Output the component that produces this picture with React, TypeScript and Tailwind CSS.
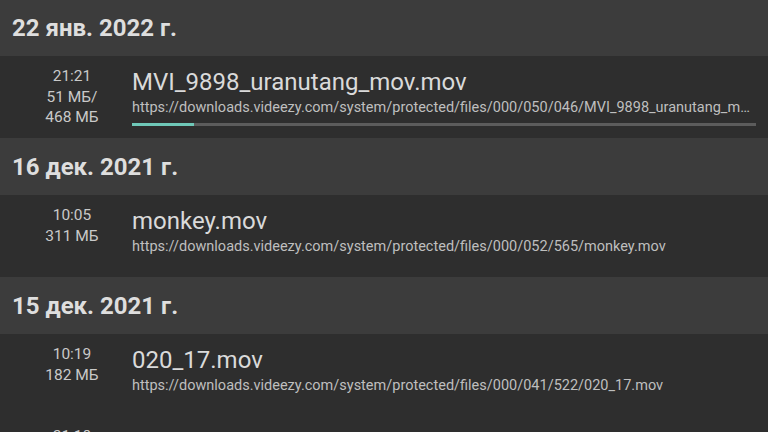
import React from "react";

type Item = {
  time: string;
  size: string[];
  name: string;
  url: string;
  progress?: number;
};

type Group = { date: string; items: Item[] };

const groups: Group[] = [
  {
    date: "22 янв. 2022 г.",
    items: [
      {
        time: "21:21",
        size: ["51 МБ/", "468 МБ"],
        name: "MVI_9898_uranutang_mov.mov",
        url: "https://downloads.videezy.com/system/protected/files/000/050/046/MVI_9898_uranutang_mov.mov",
        progress: 10,
      },
    ],
  },
  {
    date: "16 дек. 2021 г.",
    items: [
      {
        time: "10:05",
        size: ["311 МБ"],
        name: "monkey.mov",
        url: "https://downloads.videezy.com/system/protected/files/000/052/565/monkey.mov",
      },
    ],
  },
  {
    date: "15 дек. 2021 г.",
    items: [
      {
        time: "10:19",
        size: ["182 МБ"],
        name: "020_17.mov",
        url: "https://downloads.videezy.com/system/protected/files/000/041/522/020_17.mov",
      },
      {
        time: "21:18",
        size: ["95 МБ"],
        name: "forest.mov",
        url: "https://downloads.videezy.com/system/protected/files/000/040/118/forest.mov",
      },
    ],
  },
];

function Row({ item }: { item: Item }) {
  return (
    <div className="flex items-start bg-[#2e2e2e] h-[82px] shrink-0">
      <div className="w-[96px] ml-[24px] pt-[10px] text-center text-[15.5px] leading-[20.5px] text-[#c9c9c9]">
        <div>{item.time}</div>
        {item.size.map((s, i) => (
          <div key={i}>{s}</div>
        ))}
      </div>
      <div className="flex-1 min-w-0 pl-[12px] pr-[12px] pt-[13px]">
        <div className="text-[24px] leading-[26px] text-[#dadada] whitespace-nowrap overflow-hidden text-ellipsis">
          {item.name}
        </div>
        <div className="mt-[4px] text-[14.5px] leading-[18px] text-[#bfbfbf] whitespace-nowrap overflow-hidden text-ellipsis">
          {item.url}
        </div>
        {item.progress !== undefined && (
          <div className="mt-[6px] h-[3px] bg-[#5c5c5c]">
            <div className="h-full bg-[#6fc8b8]" style={{ width: `${item.progress}%` }} />
          </div>
        )}
      </div>
    </div>
  );
}

export default function App() {
  return (
    <div
      className="w-[768px] h-[432px] overflow-hidden bg-[#2e2e2e] flex flex-col"
      style={{ fontFamily: "Roboto, 'Noto Sans', sans-serif" }}
    >
      {groups.map((g, gi) => (
        <React.Fragment key={gi}>
          <div className={`${gi === 0 ? "h-[56px]" : "h-[57px]"} shrink-0 bg-[#3c3c3c] flex items-center pl-[12px]`}>
            <span className="text-[24px] font-bold text-[#dedede] leading-none">{g.date}</span>
          </div>
          {g.items.map((it, ii) => (
            <Row key={ii} item={it} />
          ))}
        </React.Fragment>
      ))}
    </div>
  );
}
